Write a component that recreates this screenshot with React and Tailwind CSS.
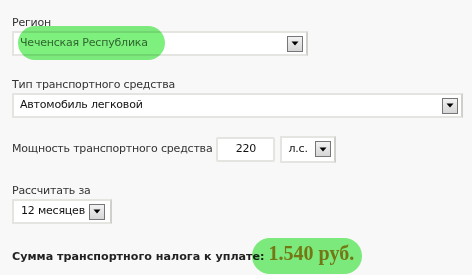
import React from "react";

function Arrow() {
  return (
    <span className="flex h-[16px] w-[16px] shrink-0 items-center justify-center border border-[#767676] bg-gradient-to-b from-[#f2f2f2] to-[#d6d6d6]">
      <svg width="8" height="5" viewBox="0 0 8 5">
        <path d="M0.5 0.5 H7.5 L4 4.5 Z" fill="#000" />
      </svg>
    </span>
  );
}

function Select({ w, text, textClass = "" }) {
  return (
    <div
      className={`flex h-[25px] items-center justify-between border-2 border-[#e4e4e0] border-r-[#cfcfcb] bg-white pl-[6px] pr-[3px] ${w}`}
    >
      <span className={textClass}>{text}</span>
      <Arrow />
    </div>
  );
}

export default function App() {
  return (
    <div className="relative h-[275px] w-[472px] overflow-hidden bg-[#f8f8f8] pl-3 pt-[14px] font-['DejaVu_Sans',sans-serif] text-[11px] tracking-[-0.2px] text-[#333]">
      <div className="h-[17px] leading-[17px]">Регион</div>
      <Select w="w-[296px]" text="Чеченская Республика" textClass="text-[#5e6e5e]" />

      <div className="mt-[21px] h-[16px] leading-[16px]">Тип транспортного средства</div>
      <Select w="w-[451px]" text="Автомобиль легковой" textClass="text-[#111]" />

      <div className="mt-[17px] flex h-[28px] items-center">
        <span>Мощность транспортного средства</span>
        <div className="ml-[4px] flex h-[25px] w-[59px] items-center justify-center rounded-[2px] border-2 border-[#e4e4e0] bg-white text-[#111]">
          220
        </div>
        <div className="ml-[5px] flex h-[27px] w-[56px] items-center justify-between border-2 border-[#e4e4e0] border-r-[#cfcfcb] bg-white pl-[6px] pr-[3px] text-[#111]">
          <span>л.с.</span>
          <Arrow />
        </div>
      </div>

      <div className="mt-[20px] h-[16px] leading-[16px]">Рассчитать за</div>
      <div className="flex h-[25px] w-[100px] items-center justify-between border-2 border-[#e4e4e0] border-r-[#cfcfcb] bg-white pl-[7px] pr-[5px] text-[#111]">
        <span>12 месяцев</span>
        <Arrow />
      </div>

      <div className="mt-[14px] flex items-baseline font-bold tracking-normal text-[#222]">
        <span className="text-[11.15px]">Сумма транспортного налога к уплате:</span>
        <span className="ml-[4px] font-['Liberation_Serif',serif] text-[20px] text-[#e8802a]">1.540 руб.</span>
      </div>

      <div className="pointer-events-none absolute left-[18px] top-[26px] h-[34px] w-[147px] rounded-full bg-[#7ef07e] mix-blend-multiply" />
      <div className="pointer-events-none absolute left-[252px] top-[238px] h-[36px] w-[110px] rounded-full bg-[#7ef07e] mix-blend-multiply" />
    </div>
  );
}
